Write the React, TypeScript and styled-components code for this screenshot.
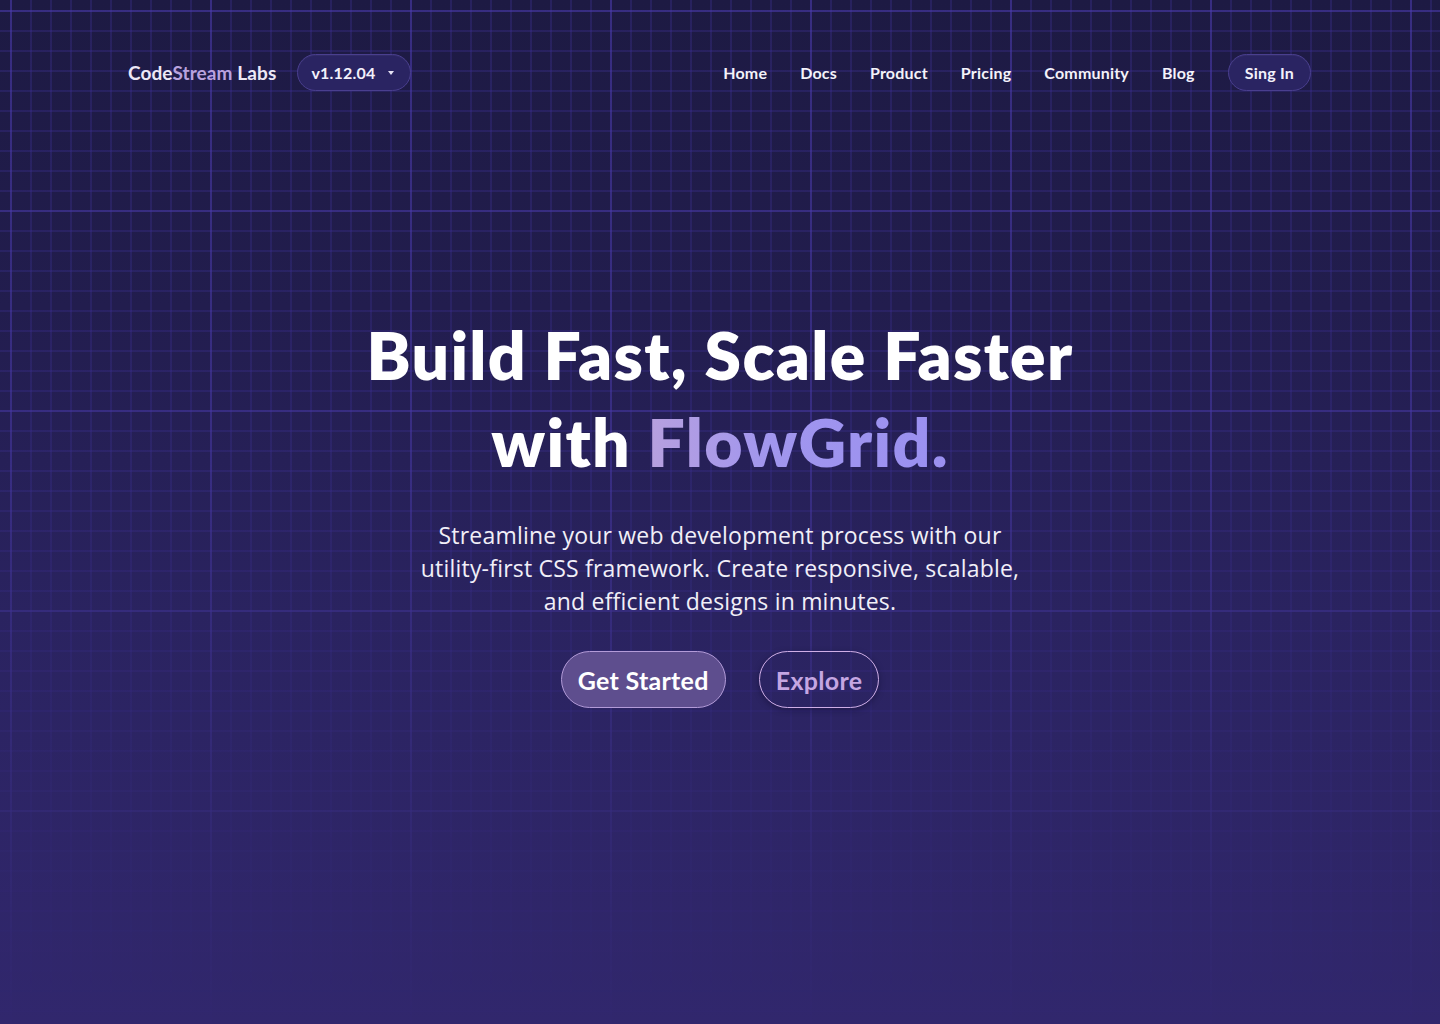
import React from "react";
import styled, { createGlobalStyle } from "styled-components";

const GlobalStyle = createGlobalStyle`
  * { box-sizing: border-box; }
  html, body { margin: 0; padding: 0; }
  body {
    background: #1d1a43;
    font-family: "Lato", "Noto Sans", sans-serif;
    -webkit-font-smoothing: antialiased;
  }
`;

const Page = styled.div`
  position: relative;
  min-height: 1024px;
  overflow: hidden;
  background: linear-gradient(180deg, #1d1a43 0%, #221d4e 30%, #2a2360 60%, #31276d 100%);

  &::before {
    content: "";
    position: absolute;
    inset: 0;
    pointer-events: none;
    background-image:
      linear-gradient(90deg, rgba(78, 62, 178, 0.42) 0 2px, transparent 2px),
      linear-gradient(180deg, rgba(78, 62, 178, 0.42) 0 2px, transparent 2px),
      linear-gradient(90deg, rgba(66, 52, 160, 0.3) 0 2px, transparent 2px),
      linear-gradient(180deg, rgba(66, 52, 160, 0.3) 0 2px, transparent 2px);
    background-size: 200px 200px, 200px 200px, 20px 20px, 20px 20px;
    background-position: 10px 10px, 10px 10px, 10px 10px, 10px 10px;
    -webkit-mask-image: linear-gradient(180deg, #000 0%, rgba(0,0,0,0.85) 45%, rgba(0,0,0,0.3) 80%, rgba(0,0,0,0.03) 100%);
    mask-image: linear-gradient(180deg, #000 0%, rgba(0,0,0,0.85) 45%, rgba(0,0,0,0.3) 80%, rgba(0,0,0,0.03) 100%);
  }
`;

const Content = styled.div`
  position: relative;
  z-index: 1;
  display: flex;
  flex-direction: column;
`;

const Nav = styled.nav`
  display: flex;
  align-items: center;
  justify-content: space-between;
  padding: 54px 129px 0 128px;
`;

const Brand = styled.div`
  display: flex;
  align-items: center;
  gap: 21px;
`;

const Logo = styled.div`
  font-size: 19px;
  font-weight: 700;
  color: #ece8f6;
  letter-spacing: 0.1px;
`;

const LogoAccent = styled.span`
  color: #b9a2de;
`;

const Pill = styled.button<{ $wide?: boolean }>`
  display: inline-flex;
  align-items: center;
  gap: 13px;
  height: 37px;
  padding: 0 16px 0 ${(p) => (p.$wide ? "16px" : "13px")};
  border-radius: 999px;
  border: 1px solid #4a3f8f;
  background: #2a2462;
  color: #f3f1fb;
  font-family: inherit;
  font-size: 16px;
  font-weight: 700;
  letter-spacing: 0.2px;
  box-shadow: inset 0 1px 0 rgba(255,255,255,0.04);
  cursor: pointer;
`;

const Caret = styled.span`
  width: 0;
  height: 0;
  border-left: 3.5px solid transparent;
  border-right: 3.5px solid transparent;
  border-top: 4px solid #e6e2f4;
`;

const Links = styled.div`
  display: flex;
  align-items: center;
  gap: 33px;
`;

const NavLink = styled.a`
  color: #f4f2fa;
  font-size: 16px;
  font-weight: 700;
  letter-spacing: 0.2px;
  text-decoration: none;
`;

const Hero = styled.section`
  display: flex;
  flex-direction: column;
  align-items: center;
  padding-top: 220px;
  text-align: center;
`;

const Title = styled.h1`
  margin: 0;
  font-size: 66px;
  line-height: 87px;
  font-weight: 800;
  color: #ffffff;
  letter-spacing: 1.3px;
`;

const Gradient = styled.span`
  background: linear-gradient(90deg, #b7a0df 0%, #a196ee 40%, #9a90f0 100%);
  -webkit-background-clip: text;
  background-clip: text;
  color: transparent;
`;

const Lead = styled.p`
  margin: 34px 0 0;
  font-family: "Open Sans", "Lato", sans-serif;
  font-size: 23px;
  line-height: 33px;
  letter-spacing: 0.2px;
  color: #f1eff8;
  font-weight: 400;
`;

const Actions = styled.div`
  display: flex;
  gap: 33px;
  margin-top: 33px;
`;

const CTA = styled.button<{ $variant: "solid" | "outline" }>`
  height: 57px;
  padding: 0 16px;
  border-radius: 999px;
  font-family: inherit;
  font-size: 25px;
  font-weight: 700;
  letter-spacing: 0.3px;
  cursor: pointer;
  border: 1.5px solid ${(p) => (p.$variant === "solid" ? "#b39bd8" : "#cfaee6")};
  background: ${(p) => (p.$variant === "solid" ? "#5e4e8e" : "transparent")};
  color: ${(p) => (p.$variant === "solid" ? "#ffffff" : "#c5a6e2")};
  box-shadow: ${(p) => (p.$variant === "solid" ? "none" : "0 2px 6px rgba(10, 5, 30, 0.35)")};
`;

export default function App() {
  return (
    <>
      <GlobalStyle />
      <Page>
        <Content>
          <Nav>
            <Brand>
              <Logo>
                Code<LogoAccent>Stream</LogoAccent> Labs
              </Logo>
              <Pill>
                v1.12.04
                <Caret />
              </Pill>
            </Brand>
            <Links>
              <NavLink href="#">Home</NavLink>
              <NavLink href="#">Docs</NavLink>
              <NavLink href="#">Product</NavLink>
              <NavLink href="#">Pricing</NavLink>
              <NavLink href="#">Community</NavLink>
              <NavLink href="#">Blog</NavLink>
              <Pill $wide>Sing In</Pill>
            </Links>
          </Nav>
          <Hero>
            <Title>
              Build Fast, Scale Faster
              <br />
              with <Gradient>FlowGrid.</Gradient>
            </Title>
            <Lead>
              Streamline your web development process with our
              <br />
              utility-first CSS framework. Create responsive, scalable,
              <br />
              and efficient designs in minutes.
            </Lead>
            <Actions>
              <CTA $variant="solid">Get Started</CTA>
              <CTA $variant="outline">Explore</CTA>
            </Actions>
          </Hero>
        </Content>
      </Page>
    </>
  );
}
